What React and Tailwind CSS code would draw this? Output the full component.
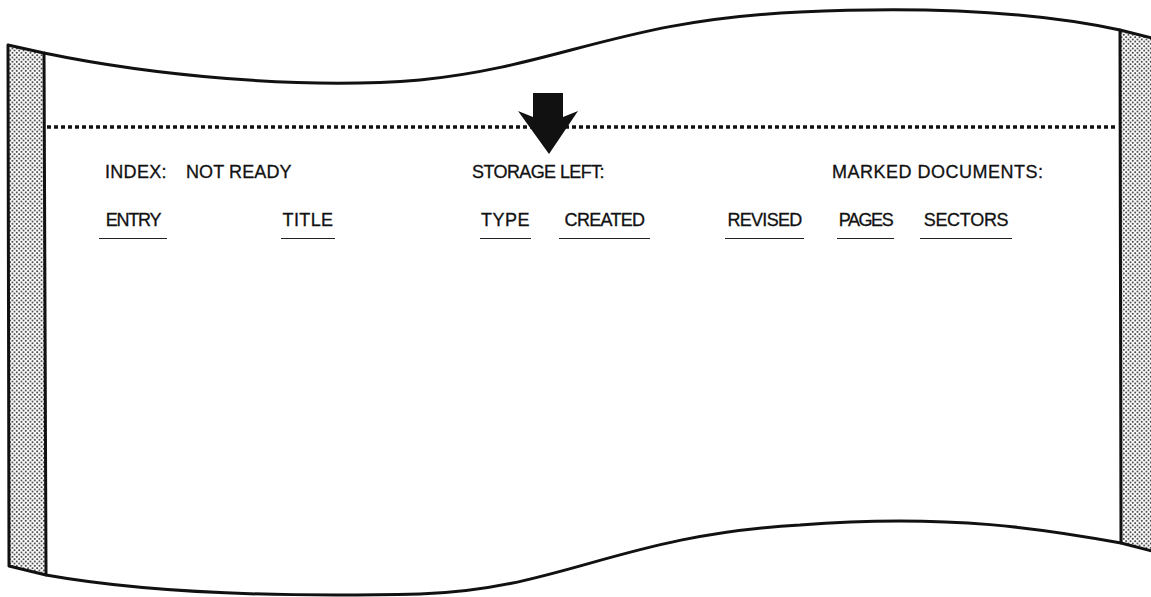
import React from "react";

function Frame() {
  return (
    <svg className="absolute inset-0" width="1151" height="597" viewBox="0 0 1151 597">
      <defs>
        <pattern id="stip" width="4.5" height="4.5" patternUnits="userSpaceOnUse">
          <rect width="4.5" height="4.5" fill="#fff" />
          <circle cx="1.1" cy="1.1" r="0.9" fill="#111" />
          <circle cx="3.35" cy="3.35" r="0.9" fill="#111" />
        </pattern>
      </defs>
      {/* left bar */}
      <polygon points="8,45 44,53 46,575 9,566" fill="url(#stip)" stroke="#111" strokeWidth="3" strokeLinejoin="round" />
      {/* right bar */}
      <polygon points="1120,30 1160,40 1160,553 1121,543" fill="url(#stip)" stroke="#111" strokeWidth="3" strokeLinejoin="round" />
      {/* top curve */}
      <path d="M44,53 C150,75 300,90 420,80 C560,66 620,20 800,12 C950,5 1050,15 1120,30" fill="none" stroke="#111" strokeWidth="3" />
      {/* bottom curve */}
      <path d="M46,575 C130,590 250,598 420,594 C560,590 620,535 800,525 C950,513 1050,530 1121,543" fill="none" stroke="#111" strokeWidth="3" />
      {/* dotted line */}
      <line x1="47" y1="127" x2="1118" y2="127" stroke="#111" strokeWidth="3.5" strokeDasharray="4 3" />
      {/* arrow */}
      <polygon points="533,93 563,93 563,117 578,111 549,154 518,111 533,117" fill="#111" />
    </svg>
  );
}

export default function App() {
  return (
    <div
      className="relative h-[597px] w-[1151px] overflow-hidden bg-white text-[18px] leading-[20px] text-[#111] [-webkit-text-stroke:0.3px_#111]"
      style={{ fontFamily: '"Liberation Sans", Arial, sans-serif' }}
    >
      <Frame />
      <div className="relative pt-[162px]">
        <div className="flex pl-[105px]">
          <span className="w-[81px] tracking-[0.3px]">INDEX:</span>
          <span className="w-[286px] tracking-[0.1px]">NOT READY</span>
          <span className="w-[360px] tracking-[-0.6px]">STORAGE LEFT:</span>
          <span className="tracking-[0.5px]">MARKED DOCUMENTS:</span>
        </div>
        <div className="mt-[28px] flex pl-[99px]">
          <div className="w-[68px] border-b-[1.5px] border-[#222] pb-2 text-center tracking-[-1.2px]">ENTRY</div>
          <div className="ml-[114px] w-[54px] border-b-[1.5px] border-[#222] pb-2 text-center tracking-[0.4px]">TITLE</div>
          <div className="ml-[145px] w-[51px] border-b-[1.5px] border-[#222] pb-2 text-center tracking-[0.5px]">TYPE</div>
          <div className="ml-[28px] w-[91px] border-b-[1.5px] border-[#222] pb-2 text-center tracking-[-0.7px]">CREATED</div>
          <div className="ml-[75px] w-[79px] border-b-[1.5px] border-[#222] pb-2 text-center tracking-[-0.7px]">REVISED</div>
          <div className="ml-[33px] w-[57px] border-b-[1.5px] border-[#222] pb-2 text-center tracking-[-1.4px]">PAGES</div>
          <div className="ml-[26px] w-[92px] border-b-[1.5px] border-[#222] pb-2 text-center tracking-[-0.3px]">SECTORS</div>
        </div>
      </div>
    </div>
  );
}
